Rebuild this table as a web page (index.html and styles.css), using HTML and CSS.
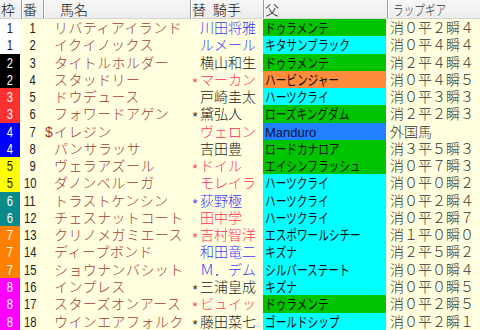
FILE: index.html
```html
<!DOCTYPE html>
<html lang="ja">
<head>
<meta charset="utf-8">
<link rel="stylesheet" href="styles.css">
</head>
<body>
<div class="tbl">
  <div class="hdr">
    <div class="h hw">枠</div>
    <div class="h hb">番</div>
    <div class="h hn">馬名</div>
    <div class="h hj"><span class="kae">替</span>騎手</div>
    <div class="h hs">父</div>
    <div class="h hl"><span class="sq">ラップギア</span></div>
  </div>

  <div class="row"><div class="waku w1"><span class="nr">1</span></div><div class="ban"><span class="nr">1</span></div><div class="name"><span class="mk"></span>リバティアイランド</div><div class="jk blue"><span class="mk"></span>川田将雅</div><div class="sire g"><span class="sq">ドゥラメンテ</span></div><div class="lap">消０平２瞬４</div></div>
  <div class="row"><div class="waku w1"><span class="nr">1</span></div><div class="ban"><span class="nr">2</span></div><div class="name"><span class="mk"></span>イクイノックス</div><div class="jk blue"><span class="mk"></span>ルメール</div><div class="sire c"><span class="sq">キタサンブラック</span></div><div class="lap">消０平４瞬４</div></div>
  <div class="row"><div class="waku w2"><span class="nr">2</span></div><div class="ban"><span class="nr">3</span></div><div class="name"><span class="mk"></span>タイトルホルダー</div><div class="jk black"><span class="mk"></span>横山和生</div><div class="sire g"><span class="sq">ドゥラメンテ</span></div><div class="lap">消２平４瞬４</div></div>
  <div class="row"><div class="waku w2"><span class="nr">2</span></div><div class="ban"><span class="nr">4</span></div><div class="name"><span class="mk"></span>スタッドリー</div><div class="jk red"><span class="mk">*</span>マーカン</div><div class="sire o"><span class="sq">ハービンジャー</span></div><div class="lap">消０平４瞬５</div></div>
  <div class="row"><div class="waku w3"><span class="nr">3</span></div><div class="ban"><span class="nr">5</span></div><div class="name"><span class="mk"></span>ドウデュース</div><div class="jk black"><span class="mk"></span>戸崎圭太</div><div class="sire c"><span class="sq">ハーツクライ</span></div><div class="lap">消０平３瞬３</div></div>
  <div class="row"><div class="waku w3"><span class="nr">3</span></div><div class="ban"><span class="nr">6</span></div><div class="name"><span class="mk"></span>フォワードアゲン</div><div class="jk black"><span class="mk">*</span>黛弘人</div><div class="sire g"><span class="sq">ローズキングダム</span></div><div class="lap">消２平２瞬３</div></div>
  <div class="row"><div class="waku w4"><span class="nr">4</span></div><div class="ban"><span class="nr">7</span></div><div class="name"><span class="mk dollar">$</span>イレジン</div><div class="jk red"><span class="mk"></span>ヴェロン</div><div class="sire b"><span class="latin">Manduro</span></div><div class="lap">外国馬</div></div>
  <div class="row"><div class="waku w4"><span class="nr">4</span></div><div class="ban"><span class="nr">8</span></div><div class="name"><span class="mk"></span>パンサラッサ</div><div class="jk black"><span class="mk"></span>吉田豊</div><div class="sire g"><span class="sq">ロードカナロア</span></div><div class="lap">消３平５瞬３</div></div>
  <div class="row"><div class="waku w5"><span class="nr">5</span></div><div class="ban"><span class="nr">9</span></div><div class="name"><span class="mk"></span>ヴェラアズール</div><div class="jk red"><span class="mk">*</span>ドイル</div><div class="sire g"><span class="sq">エイシンフラッシュ</span></div><div class="lap">消０平７瞬３</div></div>
  <div class="row"><div class="waku w5"><span class="nr">5</span></div><div class="ban"><span class="nr">10</span></div><div class="name"><span class="mk"></span>ダノンベルーガ</div><div class="jk red"><span class="mk"></span>モレイラ</div><div class="sire c"><span class="sq">ハーツクライ</span></div><div class="lap">消０平０瞬２</div></div>
  <div class="row"><div class="waku w6"><span class="nr">6</span></div><div class="ban"><span class="nr">11</span></div><div class="name"><span class="mk"></span>トラストケンシン</div><div class="jk blue"><span class="mk">*</span>荻野極</div><div class="sire c"><span class="sq">ハーツクライ</span></div><div class="lap">消０平２瞬４</div></div>
  <div class="row"><div class="waku w6"><span class="nr">6</span></div><div class="ban"><span class="nr">12</span></div><div class="name"><span class="mk"></span>チェスナットコート</div><div class="jk red"><span class="mk"></span>田中学</div><div class="sire c"><span class="sq">ハーツクライ</span></div><div class="lap">消０平２瞬７</div></div>
  <div class="row"><div class="waku w7"><span class="nr">7</span></div><div class="ban"><span class="nr">13</span></div><div class="name"><span class="mk"></span>クリノメガミエース</div><div class="jk red"><span class="mk">*</span>吉村智洋</div><div class="sire c"><span class="sq">エスポワールシチー</span></div><div class="lap">消１平０瞬０</div></div>
  <div class="row"><div class="waku w7"><span class="nr">7</span></div><div class="ban"><span class="nr">14</span></div><div class="name"><span class="mk"></span>ディープボンド</div><div class="jk blue"><span class="mk"></span>和田竜二</div><div class="sire c"><span class="sq">キズナ</span></div><div class="lap">消２平５瞬２</div></div>
  <div class="row"><div class="waku w7"><span class="nr">7</span></div><div class="ban"><span class="nr">15</span></div><div class="name"><span class="mk"></span>ショウナンバシット</div><div class="jk blue"><span class="mk"></span>Ｍ．デム</div><div class="sire c"><span class="sq">シルバーステート</span></div><div class="lap">消０平０瞬４</div></div>
  <div class="row"><div class="waku w8"><span class="nr">8</span></div><div class="ban"><span class="nr">16</span></div><div class="name"><span class="mk"></span>インプレス</div><div class="jk black"><span class="mk">*</span>三浦皇成</div><div class="sire c"><span class="sq">キズナ</span></div><div class="lap">消０平０瞬５</div></div>
  <div class="row"><div class="waku w8"><span class="nr">8</span></div><div class="ban"><span class="nr">17</span></div><div class="name"><span class="mk"></span>スターズオンアース</div><div class="jk red"><span class="mk">*</span>ビュイッ</div><div class="sire g"><span class="sq">ドゥラメンテ</span></div><div class="lap">消０平２瞬５</div></div>
  <div class="row"><div class="waku w8"><span class="nr">8</span></div><div class="ban"><span class="nr">18</span></div><div class="name"><span class="mk"></span>ウインエアフォルク</div><div class="jk black"><span class="mk">*</span>藤田菜七</div><div class="sire c"><span class="sq">ゴールドシップ</span></div><div class="lap">消０平２瞬１</div></div>
</div>
</body>
</html>
```

FILE: styles.css
```css
html, body {
  margin: 0;
  padding: 0;
  background: #ffffe0;
}
body {
  font-family: "Noto Sans CJK JP", sans-serif;
  font-size: 14px;
  font-weight: 300;
  color: #000;
  overflow: hidden;
}
.tbl {
  width: 480px;
}
.hdr, .row {
  display: grid;
  grid-template-columns: 21px 22px 147px 73px 124px 93px;
}
.hdr {
  height: 19px;
  background: linear-gradient(#f6f6f6, #ececec);
  border-bottom: 1px solid #d4d4d4;
  box-sizing: border-box;
}
.h {
  line-height: 18px;
  white-space: nowrap;
  border-left: 1px solid #9a9a9a;
  box-shadow: inset 1px 0 #ffffff;
  color: #111;
}
.hw { border-left: none; box-shadow: none; padding-left: 1px; }
.hb { padding-left: 1px; }
.hn { padding-left: 16px; }
.hj { padding-left: 1px; }
.hj .kae { display: inline-block; width: 21px; }
.hs { padding-left: 1px; }
.hl { padding-left: 5px; color: #333; }

.row {
  height: 17.28px;
  line-height: 17px;
  white-space: nowrap;
}
.nr {
  display: inline-block;
  font-family: "Liberation Sans", sans-serif;
  font-size: 14px;
  font-weight: 400;
  transform: scaleX(0.8);
}
.waku {
  text-align: center;
  border-right: 1px solid #fffff4;
  border-bottom: 1px solid #f4f4f4;
  box-sizing: border-box;
}
.waku .nr { transform-origin: center; }
.w1 { background: #ffffff; color: #222; border-bottom-color: #ffffff; }
.w2 { background: #000000; color: #fff; }
.w3 { background: #ff3030; color: #fff; }
.w4 { background: #0000ff; color: #fff; }
.w5 { background: #ffff00; color: #222; }
.w6 { background: #0a8a8a; color: #fff; }
.w7 { background: #ff8000; color: #fff; }
.w8 { background: #ff00ff; color: #fff; }

.ban {
  text-align: right;
  padding-right: 7px;
  color: #222;
}
.ban .nr { transform-origin: right center; }

.name {
  color: #a03c3c;
  letter-spacing: 0.4px;
}
.mk {
  display: inline-block;
  width: 11px;
  letter-spacing: 0;
}
.dollar {
  font-family: "Liberation Sans", sans-serif;
  padding-left: 2px;
  width: 9px;
}

.jk .mk {
  width: 10px;
  text-align: center;
  font-family: "Liberation Sans", sans-serif;
  font-size: 13px;
  vertical-align: -2px;
}
.blue { color: #3838ff; }
.red { color: #ff3060; }
.black { color: #1a1a1a; }

.sire {
  padding-left: 2px;
  border-bottom: 1px solid #eef6f0;
  border-right: 1px solid #f8f8e8;
  box-sizing: border-box;
  color: #111;
}
.sq {
  display: inline-block;
  transform: scaleX(0.76);
  transform-origin: left center;
}
.sire .sq { font-weight: 400; }
.latin {
  font-family: "Liberation Sans", sans-serif;
  font-size: 13px;
  font-weight: 400;
  color: #101040;
}
.g { background: #00c400; }
.c { background: #00ffff; }
.o { background: #ff8c3c; }
.b { background: #2080ff; }

.lap {
  padding-left: 3px;
  color: #333;
}
```
